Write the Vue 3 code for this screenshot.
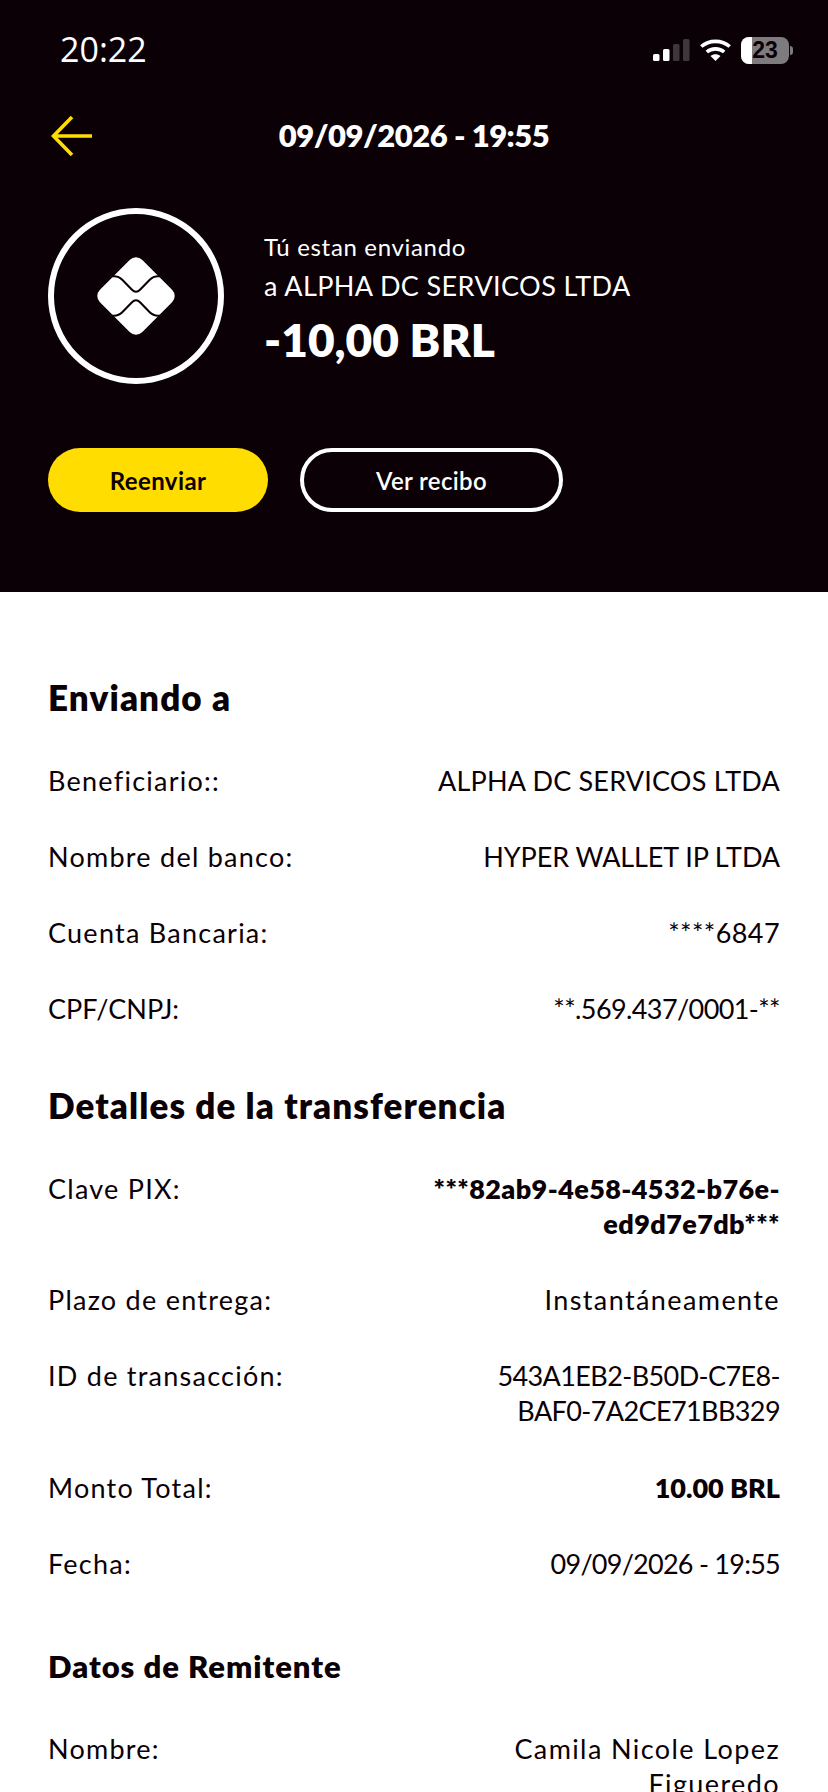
<script setup>
const sending = [
  { label: 'Beneficiario::', value: 'ALPHA DC SERVICOS LTDA', tone: 'caps' },
  { label: 'Nombre del banco:', value: 'HYPER WALLET IP LTDA', tone: 'caps-tight' },
  { label: 'Cuenta Bancaria:', value: '****6847', tone: 'semi' },
  { label: 'CPF/CNPJ:', value: '**.569.437/0001-**', tone: 'tight', plainLabel: true },
]
const details = [
  { label: 'Clave PIX:', value: '***82ab9-4e58-4532-b76e-ed9d7e7db***', tone: 'semi bold' },
  { label: 'Plazo de entrega:', value: 'Instantáneamente', tone: 'wide' },
  { label: 'ID de transacción:', value: '543A1EB2-B50D-C7E8-BAF0-7A2CE71BB329', tone: 'tight narrow' },
  { label: 'Monto Total:', value: '10.00 BRL', tone: 'bold' },
  { label: 'Fecha:', value: '09/09/2026 - 19:55', tone: 'tighter' },
]
const sender = [{ label: 'Nombre:', value: 'Camila Nicole Lopez Figueredo', tone: 'wide' }]
</script>

<template>
  <div class="page">
    <header class="hero">
      <div class="status">
        <span class="time">20:22</span>
        <div class="status-icons">
          <svg width="37" height="22" viewBox="0 0 37 22">
            <rect x="0" y="15" width="6.500" height="7" rx="1.500" fill="#fff" />
            <rect x="10" y="10" width="6.500" height="12" rx="1.500" fill="#fff" />
            <rect x="20" y="5" width="6.500" height="17" rx="1.500" fill="#3d363a" />
            <rect x="30" y="0" width="6.500" height="22" rx="1.500" fill="#3d363a" />
          </svg>
          <svg width="31" height="22" viewBox="0 0 31 22" fill="none" stroke="#fff" stroke-width="3.600">
            <path d="M1.300 7.500C9 .6 22 .6 29.700 7.500" />
            <path d="M6.800 13C11.500 8.800 19.500 8.800 24.200 13" />
            <path d="M15.500 22 10.500 17C13.500 14.800 17.500 14.800 20.500 17Z" fill="#fff" stroke="none" />
          </svg>
          <div class="battery">
            <div class="battery-body">
              <span class="battery-fill"></span>
              <span class="battery-level">23</span>
            </div>
            <span class="battery-cap"></span>
          </div>
        </div>
      </div>

      <div class="nav">
        <svg class="back" width="42" height="42" viewBox="0 0 42 42" fill="none" stroke="#ffdd00" stroke-width="3.600">
          <path d="M21 2 2.500 21 21 40" />
          <path d="M2.500 21H41" />
        </svg>
        <h1 class="nav-title">09/09/2026 - 19:55</h1>
      </div>

      <div class="summary">
        <div class="avatar">
          <svg width="78" height="78" viewBox="0 0 78 78">
            <rect x="9" y="9" width="60" height="60" rx="9" fill="#fff" transform="rotate(45 39 39)" />
            <g fill="none" stroke="#0a0005" stroke-width="2">
              <path d="M13 19.300H17C20.500 19.300 23 20.500 25.500 23L35 32.800C37.500 35.400 40.500 35.400 43 32.800L52.500 23C55 20.500 57.500 19.300 61 19.300H65" />
              <path d="M13 58.700H17C20.500 58.700 23 57.500 25.500 55L35 45.200C37.500 42.600 40.500 42.600 43 45.200L52.500 55C55 57.500 57.500 58.700 61 58.700H65" />
            </g>
          </svg>
        </div>
        <div class="summary-text">
          <p class="summary-top">Tú estan enviando</p>
          <p class="summary-name">a ALPHA DC SERVICOS LTDA</p>
          <p class="summary-amount">-10,00 BRL</p>
        </div>
      </div>

      <div class="actions">
        <button class="btn btn-primary">Reenviar</button>
        <button class="btn btn-outline">Ver recibo</button>
      </div>
    </header>

    <main class="content">
      <section class="section first">
        <h2 class="title">Enviando a</h2>
        <div v-for="row in sending" :key="row.label" class="row">
          <span class="label" :class="{ plain: row.plainLabel }">{{ row.label }}</span>
          <span class="value" :class="row.tone">{{ row.value }}</span>
        </div>
      </section>

      <section class="section">
        <h2 class="title">Detalles de la transferencia</h2>
        <div v-for="row in details" :key="row.label" class="row">
          <span class="label">{{ row.label }}</span>
          <span class="value" :class="row.tone">{{ row.value }}</span>
        </div>
      </section>

      <section class="section last">
        <h2 class="title small">Datos de Remitente</h2>
        <div v-for="row in sender" :key="row.label" class="row">
          <span class="label">{{ row.label }}</span>
          <span class="value" :class="row.tone">{{ row.value }}</span>
        </div>
      </section>
    </main>
  </div>
</template>

<style>
html, body { margin: 0; background: #fff; }
</style>

<style scoped>
.page {
  width: 828px;
  height: 1792px;
  overflow: hidden;
  background: #fff;
  color: #0a0005;
  font-family: Lato, "Noto Sans", sans-serif;
}
.hero {
  height: 592px;
  box-sizing: border-box;
  background: #0a0005;
  color: #fff;
  padding: 0 48px;
}
.status {
  height: 100px;
  margin: 0 -48px;
  padding: 0 35px 0 60px;
  display: flex;
  align-items: center;
  justify-content: space-between;
}
.time {
  font-size: 34px;
  font-family: "Open Sans", sans-serif;
  font-weight: 500;
  margin-top: -2px;
}
.status-icons { display: flex; align-items: center; gap: 10px; }
.battery { display: flex; align-items: center; gap: 1px; }
.battery-body {
  position: relative;
  width: 48px;
  height: 27px;
  border-radius: 8px;
  background: #7f7a7d;
  overflow: hidden;
  display: flex;
  align-items: center;
  justify-content: center;
}
.battery-fill { position: absolute; left: 0; top: 0; bottom: 0; width: 11px; background: #fff; }
.battery-level {
  position: relative;
  color: #0a0005;
  font-family: "Liberation Sans", sans-serif;
  font-size: 23px;
  font-weight: 700;
}
.battery-cap { width: 3px; height: 9px; background: #7f7a7d; border-radius: 0 3px 3px 0; }
.nav {
  height: 70px;
  position: relative;
  display: flex;
  align-items: center;
  justify-content: center;
}
.back { position: absolute; left: 3px; top: 15px; }
.nav-title { margin: 0; font-size: 31px; font-weight: 800; letter-spacing: -.5px; }
.summary {
  margin-top: 38px;
  display: flex;
  align-items: flex-start;
  gap: 40px;
}
.avatar {
  width: 176px;
  height: 176px;
  box-sizing: border-box;
  border: 6px solid #fff;
  border-radius: 50%;
  display: flex;
  align-items: center;
  justify-content: center;
}
.summary-text { padding-top: 22px; }
.summary-text p { margin: 0; }
.summary-top { font-size: 24px; line-height: 34px; letter-spacing: .67px; }
.summary-name { font-size: 27px; line-height: 44px; letter-spacing: .4px; }
.summary-amount { font-size: 46px; line-height: 64px; font-weight: 800; }
.actions { margin-top: 64px; display: flex; gap: 32px; }
.btn {
  height: 64px;
  border-radius: 32px;
  font-family: inherit;
  font-size: 24px;
  padding: 0;
}
.btn-primary { width: 220px; background: #ffdd00; border: 0; color: #0a0005; font-weight: 700; letter-spacing: .4px; }
.btn-outline { width: 263px; background: none; border: 4px solid #fff; color: #fff; font-weight: 600; letter-spacing: .35px; }
.content { padding: 0 48px; }
.section { padding-top: 13px; }
.section.first { padding-top: 80px; }
.section.last { padding-top: 19px; }
.title { margin: 0 0 41px; font-size: 35px; line-height: 50px; font-weight: 800; letter-spacing: 1.1px; }
.title.small { font-size: 31px; margin-bottom: 40px; letter-spacing: .95px; }
.row {
  display: flex;
  justify-content: space-between;
  gap: 40px;
  font-size: 27px;
  line-height: 35px;
  padding-bottom: 41px;
}
.label { flex: none; letter-spacing: 1.25px; }
.label.plain { letter-spacing: 0; }
.value { text-align: right; max-width: 370px; }
.value.bold { font-weight: 800; }
.value.caps { letter-spacing: .2px; }
.value.caps-tight { letter-spacing: -.1px; }
.value.semi { letter-spacing: .4px; }
.value.tight { letter-spacing: -.6px; }
.value.tighter { letter-spacing: -.75px; }
.value.wide { letter-spacing: 1.4px; }
.value.narrow { max-width: 330px; padding-bottom: 1px; }
</style>
